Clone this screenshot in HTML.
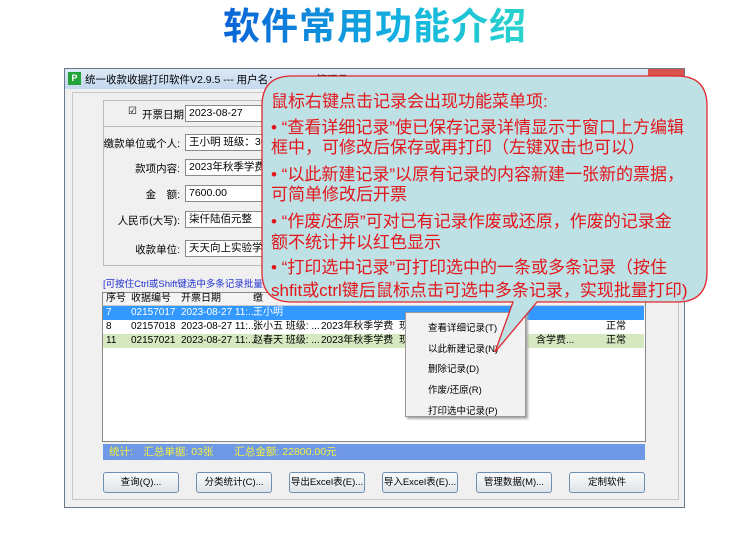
<!DOCTYPE html>
<html><head><meta charset="utf-8"><style>
*{margin:0;padding:0;box-sizing:border-box}
body{width:750px;height:536px;background:#fff;position:relative;overflow:hidden;font-family:"Liberation Sans","Noto Sans CJK SC",sans-serif}
.a{position:absolute;white-space:nowrap}
.t{font-size:11px;color:#000}
.lbl{font-size:10.5px;color:#000;text-align:right;width:90px}
.inp{position:absolute;height:17px;border:1px solid #8a8a8a;background:#fff;font-size:10.5px;line-height:15px;padding-left:3px;left:185px;width:100px;white-space:nowrap;overflow:hidden}
.btn{position:absolute;top:472px;height:21px;width:76px;border:1px solid #6d8fb0;border-radius:3px;background:linear-gradient(#fafafa,#dfe4ea);font-size:9.5px;text-align:center;line-height:19px;white-space:nowrap;overflow:hidden}
.cl{position:absolute;font-size:17px;line-height:20px;color:#e3161c;left:271px;white-space:nowrap}
.row{position:absolute;left:103px;width:541px;height:14px;font-size:10px;line-height:14px;white-space:nowrap}
.row span{position:absolute}
.mi{position:absolute;left:428px;font-size:9.5px;white-space:nowrap}
</style></head><body>
<div class="a" style="left:0;width:750px;top:2px;text-align:center;font-size:37px;line-height:50px;font-weight:bold;letter-spacing:1px"><span style="background:linear-gradient(90deg,#0a62d8,#14b4e0 60%,#2ad4cc);-webkit-background-clip:text;background-clip:text;color:transparent">软件常用功能介绍</span></div>

<!-- window -->
<div class="a" style="left:64px;top:68px;width:621px;height:440px;border:1px solid #6a7a8a;background:#f0f0f0"></div>
<div class="a" style="left:65px;top:69px;width:619px;height:20px;background:linear-gradient(#dbe8f6,#c4d8ee)"></div>
<div class="a" style="left:68px;top:72px;width:13px;height:13px;background:#22a33a;color:#fff;font-size:9px;font-weight:bold;text-align:center;line-height:13px">P</div>
<div class="a t" style="left:85px;top:72px;font-size:10.5px">统一收款收据打印软件V2.9.5 --- 用户名：admin ( 管理员</div>
<div class="a" style="left:648px;top:69px;width:36px;height:17px;background:#d9534f"></div>
<div class="a" style="left:72px;top:92px;width:607px;height:408px;border:1px solid #c8c8c8;background:#f0f0f0"></div>
<div class="a" style="left:103px;top:100px;width:170px;height:166px;border:1px solid #bbb"></div>
<div class="a" style="left:103px;top:126px;width:170px;height:1px;background:#bbb"></div>
<div class="a" style="left:128px;top:106px;font-size:10px">☑</div>
<div class="a t" style="left:142px;top:107px;font-size:10.5px">开票日期:</div>
<div class="inp" style="top:105px">2023-08-27</div>
<div class="a lbl" style="left:90px;top:136px">缴款单位或个人:</div><div class="inp" style="top:134px">王小明 班级：305</div>
<div class="a lbl" style="left:90px;top:161px">款项内容:</div><div class="inp" style="top:159px">2023年秋季学费</div>
<div class="a lbl" style="left:90px;top:187px">金　额:</div><div class="inp" style="top:185px">7600.00</div>
<div class="a lbl" style="left:90px;top:213px">人民币(大写):</div><div class="inp" style="top:211px">柒仟陆佰元整</div>
<div class="a lbl" style="left:90px;top:242px">收款单位:</div><div class="inp" style="top:240px">天天向上实验学校</div>
<div class="a" style="left:103px;top:276px;font-size:9.5px;color:#2030d0">[可按住Ctrl或Shift键选中多条记录批量打印</div>

<!-- table -->
<div class="a" style="left:102px;top:292px;width:544px;height:150px;border:1px solid #888;background:#fff"></div>
<div class="a" style="left:103px;top:293px;width:542px;height:13px;background:#f4f4f4;border-bottom:1px solid #ccc"></div>
<div class="row" style="top:292px"><span style="left:3px">序号</span><span style="left:28px">收据编号</span><span style="left:78px">开票日期</span><span style="left:150px">缴</span></div>
<div class="row" style="top:306px;background:#3399ff;color:#fff"><span style="left:3px">7</span><span style="left:28px">02157017</span><span style="left:78px">2023-08-27 11:...</span><span style="left:150px">王小明</span></div>
<div class="row" style="top:320px"><span style="left:3px">8</span><span style="left:28px">02157018</span><span style="left:78px">2023-08-27 11:...</span><span style="left:150px">张小五 班级: ...</span><span style="left:218px">2023年秋季学费</span><span style="left:296px">现</span><span style="left:503px">正常</span></div>
<div class="row" style="top:334px;background:#d6e8bf"><span style="left:3px">11</span><span style="left:28px">02157021</span><span style="left:78px">2023-08-27 11:...</span><span style="left:150px">赵春天 班级: ...</span><span style="left:218px">2023年秋季学费</span><span style="left:296px">现</span><span style="left:433px">含学费...</span><span style="left:503px">正常</span></div>
<div class="a" style="left:103px;top:444px;width:542px;height:16px;background:#6f98e6;color:#f4f040;font-size:10.5px;line-height:16px;padding-left:6px">统计:　汇总单据: 03张　　汇总金额: 22800.00元</div>

<!-- context menu -->
<div class="a" style="left:405px;top:312px;width:121px;height:105px;background:#f2f2f2;border:1px solid #999;box-shadow:2px 2px 2px #aaa"></div>
<div class="mi" style="top:320px">查看详细记录(T)</div>
<div class="mi" style="top:341px">以此新建记录(N)</div>
<div class="mi" style="top:361px">删除记录(D)</div>
<div class="mi" style="top:382px">作废/还原(R)</div>
<div class="mi" style="top:403px">打印选中记录(P)</div>

<div class="btn" style="left:103px">查询(Q)...</div>
<div class="btn" style="left:196px">分类统计(C)...</div>
<div class="btn" style="left:289px">导出Excel表(E)...</div>
<div class="btn" style="left:382px">导入Excel表(E)...</div>
<div class="btn" style="left:476px">管理数据(M)...</div>
<div class="btn" style="left:569px">定制软件</div>

<!-- callout -->
<svg class="a" style="left:0;top:0" width="750" height="536">
<path d="M292 76 H677 Q707 76 707 106 V272 Q707 302 677 302 H537 L495 352 L513 302 H292 Q262 302 262 272 V106 Q262 76 292 76 Z" fill="#bde1e5" stroke="#e3262c" stroke-width="1.3"/>
</svg>
<div class="cl" style="top:92px">鼠标右键点击记录会出现功能菜单项:</div>
<div class="cl" style="top:118px">•&nbsp;“查看详细记录”使已保存记录详情显示于窗口上方编辑</div>
<div class="cl" style="top:138px">框中，可修改后保存或再打印（左键双击也可以）</div>
<div class="cl" style="top:165px">•&nbsp;“以此新建记录”以原有记录的内容新建一张新的票据，</div>
<div class="cl" style="top:185px">可简单修改后开票</div>
<div class="cl" style="top:212px">•&nbsp;“作废/还原”可对已有记录作废或还原，作废的记录金</div>
<div class="cl" style="top:233px">额不统计并以红色显示</div>
<div class="cl" style="top:258px">•&nbsp;“打印选中记录”可打印选中的一条或多条记录（按住</div>
<div class="cl" style="top:281px">shfit或ctrl键后鼠标点击可选中多条记录，实现批量打印)</div>
</body></html>
